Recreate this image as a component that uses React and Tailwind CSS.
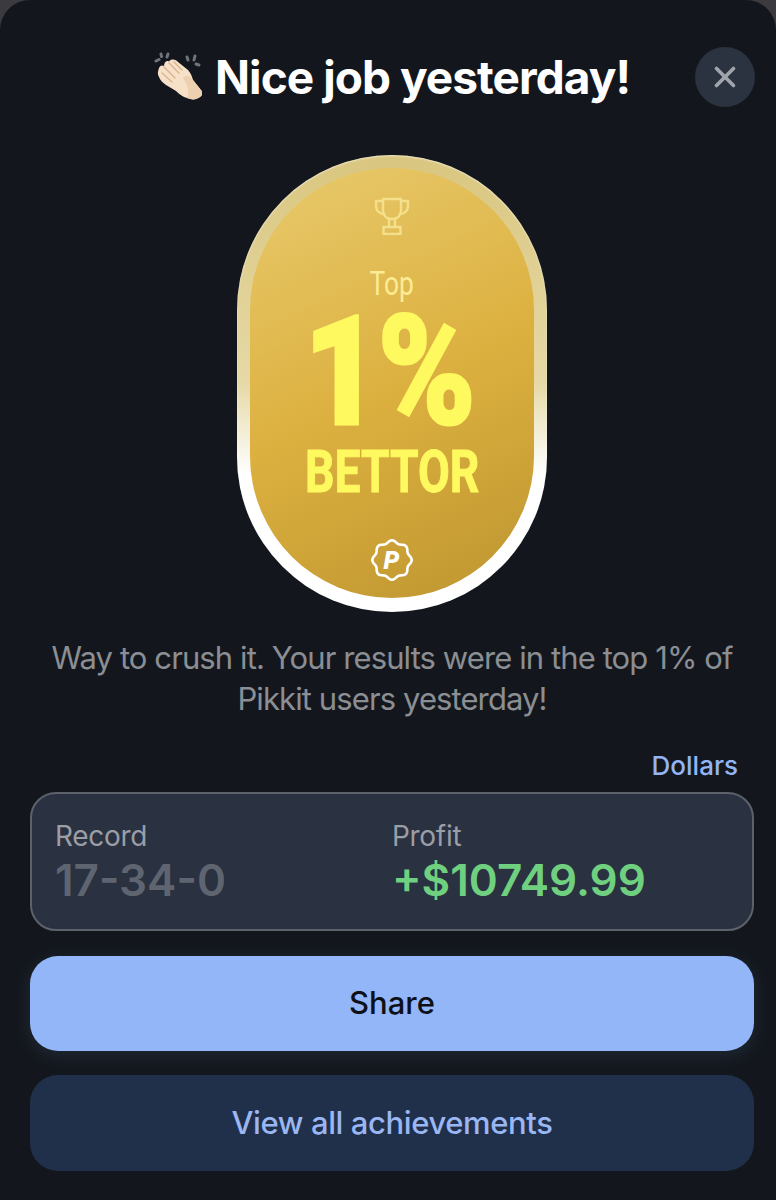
import { X } from "lucide-react";

const sans = "font-['Inter','Liberation_Sans',sans-serif]";

function ClapEmoji() {
  return (
    <svg width="52" height="50" viewBox="0 0 52 50" className="shrink-0">
      {/* spark wedges */}
      <g stroke="#6d7579" strokeWidth="3" strokeLinecap="round">
        <path d="M2 9 L5 7.5" />
        <path d="M7 2 L7.5 4.5" />
        <path d="M14 2 L13 5" />
        <path d="M33 5 L34 8" />
        <path d="M41 4 L40 8" />
        <path d="M45 13 L42 12" />
      </g>
      {/* hands */}
      <path
        d="M5 16 C6 13 9 13 10 14 C10 10 13 8 15 9.5 C17 6.5 22 7 24 10 L34 18 C37 21 38 25 39 28 L47 38 C49 41 48 44 46 45 C42 48 38 48 33 46 C29 45 25 42 22 39 L12 33 C9 31 6 28 5 25 C3 22 4 19 5 16 Z"
        fill="#f6e0c8"
      />
      <path
        d="M29 26 C31 23 35 23 37 26 L39 28 L47 38 C49 41 48 44 46 45 C42 48 38 48 33 46 C36 40 34 34 29 26 Z"
        fill="#ecd0b0"
      />
      <g stroke="#d9b28c" strokeWidth="1.2" fill="none" strokeLinecap="round">
        <path d="M8 21 L18 30" />
        <path d="M10 15 L21 26" />
        <path d="M15 11 L25 21" />
        <path d="M20 10 L28 18" />
      </g>
    </svg>
  );
}

function Trophy() {
  return (
    <svg width="36" height="38" viewBox="0 0 36 38" fill="none" stroke="#f4e08a" strokeWidth="2.4" strokeLinejoin="round" strokeLinecap="round">
      <path d="M9 2 H27 V13 C27 19 23 22 18 22 C13 22 9 19 9 13 Z" />
      <path d="M9 4 H2 V9 C2 14 6 17 10 17" />
      <path d="M27 4 H34 V9 C34 14 30 17 26 17" />
      <path d="M15 22 V30 M21 22 V30" />
      <rect x="9.5" y="30" width="17" height="7" />
    </svg>
  );
}

function PikkitSeal() {
  // scalloped ring with eight soft lobes
  const pts = [];
  for (let i = 0; i <= 96; i++) {
    const a = (i / 96) * Math.PI * 2;
    const r = 18.4 + 1.3 * Math.cos(8 * a);
    pts.push(`${(21 + r * Math.sin(a)).toFixed(2)},${(21 - r * Math.cos(a)).toFixed(2)}`);
  }
  return (
    <svg width="42" height="42" viewBox="0 0 42 42">
      <polygon points={pts.join(" ")} fill="none" stroke="#fff" strokeWidth="2.6" strokeLinejoin="round" />
      <text x="20.5" y="30" textAnchor="middle" fontFamily="Roboto, sans-serif" fontWeight="900" fontStyle="italic" fontSize="25" fill="#fff">P</text>
    </svg>
  );
}

function Badge() {
  return (
    <div className="w-[310px] h-[457px] rounded-full p-[13px] pb-[14px] bg-gradient-to-b from-[#d9c67f] via-[#e6d9a6] via-50% to-white to-70% shadow-[inset_0_1px_2px_rgba(255,255,255,0.6)]">
      <div className="h-full rounded-full bg-[linear-gradient(155deg,#e6c564_10%,#dcb03f_52%,#bd9530_100%)] flex flex-col items-center pt-[29px] font-['Roboto',sans-serif]">
        <Trophy />
        <div className="mt-[31px] text-[33px] leading-[36px] font-normal text-[#fbec95] scale-x-[0.8]">Top</div>
        <div className="mt-[14px] mr-[8px] text-[152px] leading-[112px] font-black text-[#fdf95f] scale-x-[0.868] tracking-[-3px] [-webkit-text-stroke:3px_#fdf95f]">1%</div>
        <div className="mt-[20px] text-[60px] leading-[48px] font-bold text-[#fdf95f] scale-x-[0.77] [-webkit-text-stroke:1px_#fdf95f]">BETTOR</div>
        <div className="mt-[43px]">
          <PikkitSeal />
        </div>
      </div>
    </div>
  );
}

export default function App() {
  return (
    <div className="bg-[#3b3b3f] min-h-[1200px]">
      <div className={`${sans} relative h-[1200px] overflow-hidden rounded-t-[30px] bg-[#13171d] pl-[30px] pr-[22px]`}>
        {/* Header */}
        <div className="h-[155px] pt-[47px]">
          <div className="flex items-center justify-center gap-[9px] h-[60px]">
            <ClapEmoji />
            <h1 className="text-[46px] leading-[60px] font-bold tracking-[-0.95px] text-white">Nice job yesterday!</h1>
          </div>
          <button className="absolute right-[21px] top-[47px] w-[60px] h-[60px] rounded-full bg-[#2b3240] flex items-center justify-center">
            <X size={34} strokeWidth={2.6} color="#a0a4ab" />
          </button>
        </div>

        <div className="flex justify-center">
          <Badge />
        </div>

        <p className="mt-[25px] text-center text-[31px] leading-[41px] tracking-[-0.9px] text-[#8b8e93]">
          Way to crush it. Your results were in the top 1% of
          <br />
          Pikkit users yesterday!
        </p>

        <div className="mt-[31px] pr-[16px] text-right text-[26px] leading-[32px] font-medium text-[#93b5f6]">Dollars</div>

        {/* Stats */}
        <div className="mt-[10px] h-[139px] rounded-[26px] border-2 border-[#5c616b] bg-[#2a3140] grid grid-cols-[337px_1fr] pl-[23px] pt-[25px]">
          <div>
            <div className="text-[28px] leading-[34px] tracking-[-0.3px] text-[#9a9ea6]">Record</div>
            <div className="mt-[1px] text-[44px] leading-[52px] font-semibold text-[#5f6570]">17-34-0</div>
          </div>
          <div>
            <div className="text-[28px] leading-[34px] tracking-[-0.3px] text-[#9a9ea6]">Profit</div>
            <div className="mt-[1px] text-[44px] leading-[52px] font-semibold text-[#6fd07f]">+$10749.99</div>
          </div>
        </div>

        <button className="mt-[25px] w-full h-[95px] rounded-[28px] bg-[#93b6f8] text-[31px] font-medium text-[#0d1117] shadow-[0_4px_18px_rgba(147,182,248,0.12)]">
          Share
        </button>
        <button className="mt-[24px] w-full h-[96px] rounded-[28px] bg-[#20304a] text-[31px] font-medium tracking-[-0.4px] text-[#9ab6f3]">
          View all achievements
        </button>
      </div>
    </div>
  );
}
